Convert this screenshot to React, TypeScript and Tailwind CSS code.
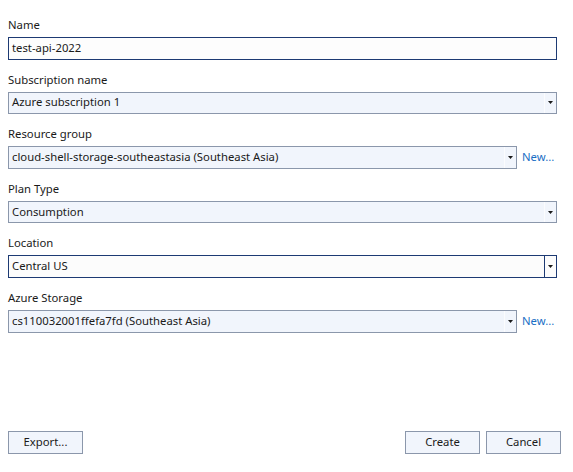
import React from 'react'

const font = { fontFamily: '"Noto Sans", "Open Sans", sans-serif' }

function Arrow() {
  return (
    <svg width="5" height="3" viewBox="0 0 5 3" className="block">
      <path d="M0 0h5L2.5 3z" fill="#1a1a1a" />
    </svg>
  )
}

function Field({ label, children }: { label: string; children: React.ReactNode }) {
  return (
    <div className="flex flex-col">
      <div className="h-4 text-[11.3px] leading-4 text-[#1a1a1a]">{label}</div>
      <div className="mt-1 flex items-center">{children}</div>
    </div>
  )
}

function Combo({ value, focused, width }: { value: string; focused?: boolean; width: string }) {
  return (
    <div
      className={
        'flex h-[22.6px] items-stretch border ' +
        width +
        (focused ? ' border-[#1d3a73] bg-[#fcfcfc]' : ' border-[#8b97ab] bg-[#f1f5fc]')
      }
    >
      <div className="flex flex-1 items-center truncate pl-[3px] text-[11.3px] text-[#1a1a1a]">{value}</div>
      <div
        className={
          'flex w-3 items-center justify-center border-l ' + (focused ? 'border-[#1d3a73]' : 'border-[#fbfcfe]')
        }
      >
        <Arrow />
      </div>
    </div>
  )
}

function NewLink() {
  return <span className="ml-[5px] text-[11.3px] text-[#1a6fc5]">New...</span>
}

function Btn({ children }: { children: React.ReactNode }) {
  return (
    <button className="flex h-[23px] w-[75px] items-center justify-center border border-[#8b97ab] bg-[#f1f5fc] text-[11.3px] text-[#1a1a1a]">
      {children}
    </button>
  )
}

export default function App() {
  return (
    <div className="flex h-[472px] w-[573px] flex-col bg-white pt-[17px] pb-[18px] pl-2 pr-3" style={font}>
      <div className="flex flex-col gap-[12px] pr-1">
        <Field label="Name">
          <div className="flex h-[22.6px] w-[549px] items-center border border-[#1d3a73] bg-[#fdfdfd] pl-[3px] text-[11.3px] text-[#1a1a1a]">
            test-api-2022
          </div>
        </Field>
        <Field label="Subscription name">
          <Combo value="Azure subscription 1" width="w-[549px]" />
        </Field>
        <Field label="Resource group">
          <Combo value="cloud-shell-storage-southeastasia (Southeast Asia)" width="w-[509px]" />
          <NewLink />
        </Field>
        <Field label="Plan Type">
          <Combo value="Consumption" width="w-[549px]" />
        </Field>
        <Field label="Location">
          <Combo value="Central US" focused width="w-[549px]" />
        </Field>
        <Field label="Azure Storage">
          <Combo value="cs110032001ffefa7fd (Southeast Asia)" width="w-[509px]" />
          <NewLink />
        </Field>
      </div>
      <div className="mt-auto flex items-center">
        <Btn>Export...</Btn>
        <div className="flex-1" />
        <div className="flex gap-[6px]">
          <Btn>Create</Btn>
          <Btn>Cancel</Btn>
        </div>
      </div>
    </div>
  )
}
